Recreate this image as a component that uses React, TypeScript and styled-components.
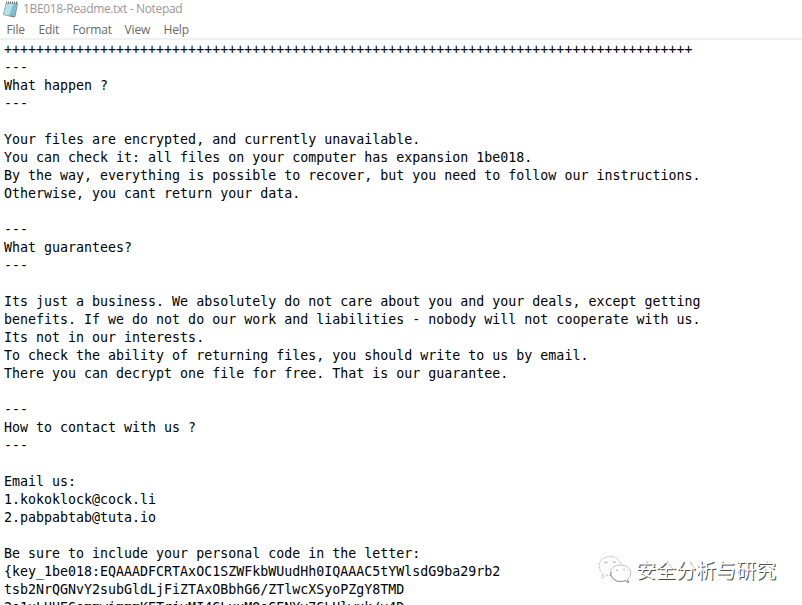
import React from "react";
import styled, { createGlobalStyle } from "styled-components";

const GlobalStyle = createGlobalStyle`
  body { margin: 0; background: #fff; overflow: hidden; }
`;

const Window = styled.div`
  position: relative;
  display: flex;
  flex-direction: column;
  width: 802px;
  height: 605px;
  overflow: hidden;
  background: #fff;
`;

const TitleBar = styled.header`
  display: flex;
  flex: none;
  align-items: center;
  height: 18px;
  padding-left: 3px;
  gap: 5px;
  font: 12px/18px "Open Sans", "Noto Sans", sans-serif;
  color: #999;
`;

const Title = styled.span`
  white-space: pre;
  letter-spacing: -0.34px;
`;

const MenuBar = styled.nav`
  display: flex;
  flex: none;
  box-sizing: border-box;
  height: 22px;
  padding: 2px 0 0 6.5px;
  gap: 14px;
  border-bottom: 2px solid #f0f0f0;
  font: 12px/20px "Open Sans", "Noto Sans", sans-serif;
  letter-spacing: -0.15px;
  color: #686868;
`;

const MenuItem = styled.span<{ $width: number }>`
  width: ${(p) => p.$width}px;
  white-space: nowrap;
`;

const Editor = styled.pre`
  flex: 1;
  min-height: 0;
  margin: 0;
  padding: 1px 0 0 4px;
  overflow: hidden;
  font: 13.3px/18px "DejaVu Sans Mono", monospace;
  color: #000;
`;

const Watermark = styled.div`
  position: absolute;
  left: 597px;
  top: 554px;
  display: flex;
  align-items: center;
  gap: 4px;
  font: 20px/32px "Noto Sans CJK SC", sans-serif;
  color: #fff;
  text-shadow: 1px 1px 0 #4c4c4c;
  white-space: nowrap;
`;

const CONTENT = [
  "+".repeat(86),
  "---",
  "What happen ?",
  "---",
  "",
  "Your files are encrypted, and currently unavailable.",
  "You can check it: all files on your computer has expansion 1be018.",
  "By the way, everything is possible to recover, but you need to follow our instructions.",
  "Otherwise, you cant return your data.",
  "",
  "---",
  "What guarantees?",
  "---",
  "",
  "Its just a business. We absolutely do not care about you and your deals, except getting",
  "benefits. If we do not do our work and liabilities - nobody will not cooperate with us.",
  "Its not in our interests.",
  "To check the ability of returning files, you should write to us by email.",
  "There you can decrypt one file for free. That is our guarantee.",
  "",
  "---",
  "How to contact with us ?",
  "---",
  "",
  "Email us:",
  "1.kokoklock@cock.li",
  "2.pabpabtab@tuta.io",
  "",
  "Be sure to include your personal code in the letter:",
  "{key_1be018:EQAAADFCRTAxOC1SZWFkbWUudHh0IQAAAC5tYWlsdG9ba29rb2",
  "tsb2NrQGNvY2subGldLjFiZTAxOBbhG6/ZTlwcXSyoPZgY8TMD",
  "2o1xLUUEGsmmwimmmKETrjvMI4GLxxMQoGENYv7GLUlwxk/v4D",
].join("\n");

const NotepadIcon = () => (
  <svg width="15" height="17" viewBox="0 0 15 17">
    <path d="M3 2h12l-2.500 13.500L11 16.500 0 14z" fill="#8a8578" />
    <path d="M3 2h11l-2 13L0 14z" fill="#7fc0cf" />
    <path d="M3.500 3h7L6 14.500 1 14z" fill="#b5e0e8" />
    <path d="M3 1.500h11" stroke="#667" strokeDasharray="1 1" strokeWidth="2" />
  </svg>
);

const ChatIcon = () => (
  <svg width="35" height="32" viewBox="0 1 35 32" fill="#fff" strokeWidth=".8">
    <path
      d="M14 22.500L9.500 22 5 25l1-4.500C3.500 18.500 2 16 2 13 2 7.500 7 3.500 13 3.500S23 7 24 11.500"
      stroke="#aaa"
      strokeDasharray="2 1"
    />
    <path d="M7.500 10q1-2 3 0M16 9q1.500-1 2.500 1" stroke="#777" />
    <path
      d="M23.500 12c-6 0-10 3.500-10 8s4 8.500 10 8.500c2 0 3.500-.5 4.500-1l3.500 2-.8-3.500c2-1.500 3-3.500 3-6 0-4.500-4.500-8-10.200-8z"
      stroke="#aaa"
    />
    <path d="M14 19c-1 5 4 9.500 9.500 9.500 2 0 3.500-.5 4.500-1l3.500 2-.8-3" stroke="#777" />
    <path d="M19 17.500q1-1 2 0M26 17q1-1 2 0" stroke="#999" />
  </svg>
);

const MENUS = [
  { label: "File", width: 18 },
  { label: "Edit", width: 20 },
  { label: "Format", width: 38 },
  { label: "View", width: 25 },
  { label: "Help", width: 25 },
];

export default function App() {
  return (
    <>
      <GlobalStyle />
      <Window>
        <TitleBar>
          <NotepadIcon />
          <Title>1BE018-Readme.txt - Notepad</Title>
        </TitleBar>
        <MenuBar>
          {MENUS.map((m) => (
            <MenuItem key={m.label} $width={m.width}>{m.label}</MenuItem>
          ))}
        </MenuBar>
        <Editor>{CONTENT}</Editor>
        <Watermark>
          <ChatIcon />
          <span>安全分析与研究</span>
        </Watermark>
      </Window>
    </>
  );
}
